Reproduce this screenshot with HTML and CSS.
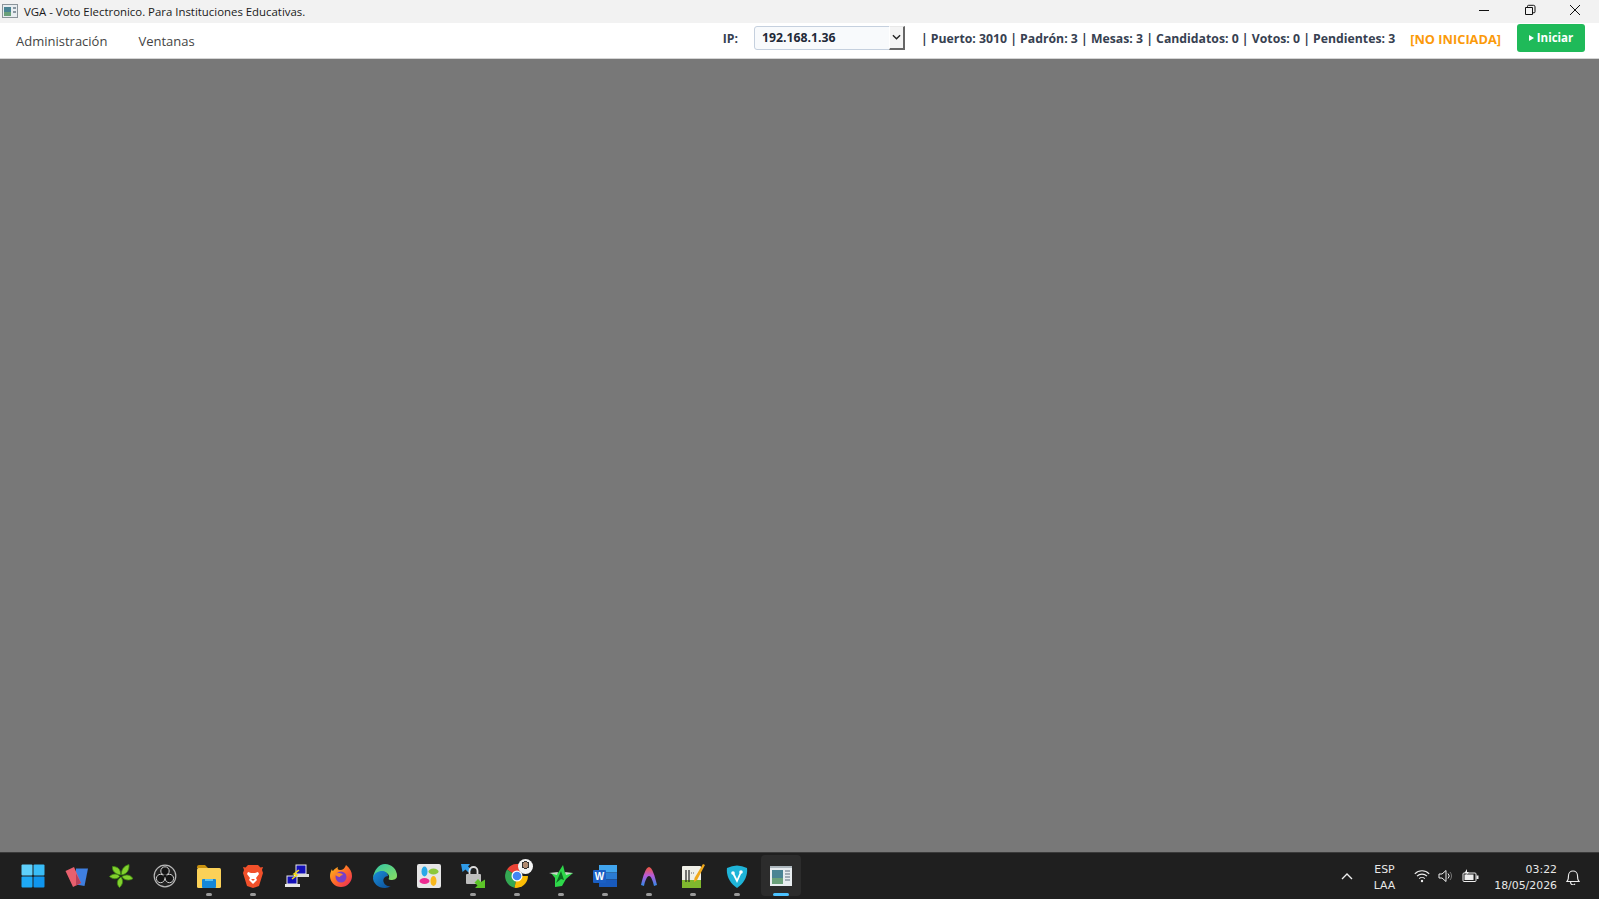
FILE: index.html
```html
<!DOCTYPE html>
<html lang="es">
<head>
    <meta charset="UTF-8">
    <title>VGA - Voto Electronico</title>
    <link rel="stylesheet" href="styles.css">
</head>
<body>
    <div class="window">
        <div class="titlebar">
            <svg class="app-icon" viewBox="0 0 16 14" width="16" height="14">
                <rect x="0.5" y="0.5" width="15" height="13" fill="#e8edf0" stroke="#8b949a"/>
                <rect x="2" y="3" width="7" height="9" fill="#4a8494"/>
                <rect x="2" y="8" width="7" height="4" fill="#6aa07a"/>
                <rect x="11" y="3" width="3" height="2" fill="#8a98a2"/>
                <rect x="11" y="7" width="3" height="2" fill="#8a98a2"/>
            </svg>
            <span class="title-text">VGA - Voto Electronico. Para Instituciones Educativas.</span>
            <div class="win-controls">
                <svg viewBox="0 0 12 12" width="12" height="12"><path d="M1 6.500h10" stroke="#111" stroke-width="1" fill="none"/></svg>
                <svg viewBox="0 0 12 12" width="12" height="12"><path d="M1.500 3.500h7v7h-7z M3.500 3.500v-1.200q0-1 1-1h5q1.500 0 1.500 1.500v5q0 1-1 1h-1.200" stroke="#111" stroke-width="1" fill="none"/></svg>
                <svg viewBox="0 0 12 12" width="12" height="12"><path d="M1 1l10 10M11 1L1 11" stroke="#111" stroke-width="1" fill="none"/></svg>
            </div>
        </div>

        <div class="menubar">
            <nav class="menu">
                <span>Administración</span>
                <span>Ventanas</span>
            </nav>
            <div class="status">
                <label class="ip-label" for="ip">IP:</label>
                <div class="ip-select">
                    <select id="ip"><option>192.168.1.36</option></select>
                    <span class="ip-arrow">
                        <svg viewBox="0 0 10 6" width="9" height="6"><path d="M1 1l4 4 4-4" stroke="#222" stroke-width="1.500" fill="none"/></svg>
                    </span>
                </div>
                <span class="stats">| Puerto: 3010 | Padrón: 3 | Mesas: 3 | Candidatos: 0 | Votos: 0 | Pendientes: 3</span>
                <span class="state">[NO INICIADA]</span>
                <button class="start"><span class="play"></span>Iniciar</button>
            </div>
        </div>

        <main class="workspace"></main>
    </div>

    <footer class="taskbar">
        <div class="apps">
            <!-- start -->
            <div class="app"><svg viewBox="0 0 24 24" width="24" height="24">
                <rect x="0.500" y="0.500" width="11" height="11" rx="1" fill="#5fd0fb"/><rect x="12.500" y="0.500" width="11" height="11" rx="1" fill="#39bdf8"/>
                <rect x="0.500" y="12.500" width="11" height="11" rx="1" fill="#1ea9f5"/><rect x="12.500" y="12.500" width="11" height="11" rx="1" fill="#0f95ee"/>
            </svg></div>
            <!-- cards -->
            <div class="app"><svg viewBox="0 0 24 24" width="24" height="24">
                <path d="M11 4.500h12l-3.500 17.500-8.500-1.500z" fill="#3f7fe0"/>
                <path d="M0.500 7L9 3l7 16-8 4z" fill="#e8606e"/>
                <path d="M11 9.500l5 9.500-5 2.500z" fill="#b8405a"/>
            </svg></div>
            <!-- leaf -->
            <div class="app"><svg viewBox="0 0 24 24" width="24" height="24">
                <path d="M11.500 11C6 10 3 7 3.500 2.500 8.500 2.500 12 5 11.500 11zM12.500 11C12 6 14.500 2 20 0.500 20.500 6 18 10 12.500 11zM13 12.500c4-2.500 8-2 11 2-3.500 2.500-9 2-11-2zM12 13c2.500 3.500 2 7.500-1.500 10.500C7 20 8 15.500 12 13zM10.500 12.500C8 15.500 4 15.500 0.500 12.500 3.500 9.500 8.500 9 10.500 12.500z" fill="#82d02e" stroke="#3f8a12" stroke-width="0.800"/>
            </svg></div>
            <!-- obs -->
            <div class="app"><svg viewBox="0 0 24 24" width="24" height="24">
                <circle cx="12" cy="12" r="10.800" fill="#222" stroke="#b8b8b8" stroke-width="1.200"/>
                <circle cx="12" cy="7" r="4.200" fill="#141414" stroke="#cfcfcf" stroke-width="1"/>
                <circle cx="16.400" cy="14.500" r="4.200" fill="#141414" stroke="#cfcfcf" stroke-width="1"/>
                <circle cx="7.600" cy="14.500" r="4.200" fill="#141414" stroke="#cfcfcf" stroke-width="1"/>
                <circle cx="12" cy="12" r="1.800" fill="#141414"/>
            </svg></div>
            <!-- explorer -->
            <div class="app on"><svg viewBox="0 0 24 24" width="24" height="24">
                <path d="M0 3q0-2 2-2h6l3 3h-11z" fill="#c9920f"/>
                <rect x="0" y="4" width="24" height="20" rx="1.500" fill="#fbd158"/>
                <rect x="5" y="15" width="14" height="9" rx="1" fill="#1587d8"/>
                <rect x="8" y="15" width="8" height="2" fill="#5cc2f2"/>
            </svg></div>
            <!-- brave -->
            <div class="app on"><svg viewBox="0 0 24 24" width="24" height="24">
                <path d="M7 1h10l2.500 2.500L22 3l-1 3 1 3-4 13-6 2-6-2L2 9l1-3-1-3 2.500.5z" fill="#f1502a"/>
                <path d="M7 8l3 1h4l3-1 1 2-3 4 1 2-4 4-4-4 1-2-3-4z" fill="#fff"/>
                <path d="M10 15h4l-2 2z" fill="#f1502a"/>
            </svg></div>
            <!-- network -->
            <div class="app"><svg viewBox="0 0 24 24" width="24" height="24">
                <rect x="11" y="1" width="10" height="9" fill="#1410b8" stroke="#e8e8e8"/>
                <rect x="9" y="10" width="15" height="3" fill="#dcdcdc"/>
                <rect x="2" y="12" width="10" height="8" fill="#1410b8" stroke="#e8e8e8"/>
                <rect x="0" y="20" width="15" height="3" fill="#e8e8e8"/>
                <path d="M14 6L9 10l3 1-5 4" stroke="#f4dc1a" stroke-width="1.500" fill="none"/>
            </svg></div>
            <!-- firefox -->
            <div class="app"><svg viewBox="0 0 24 24" width="24" height="24">
                <defs><linearGradient id="ff" x1="0" y1="0" x2="1" y2="1"><stop offset="0" stop-color="#ffc21a"/><stop offset="0.500" stop-color="#ff6a2a"/><stop offset="1" stop-color="#e8245e"/></linearGradient></defs>
                <path d="M17 1c4 3 6 7 6 11a11 11 0 0 1-22 0c0-3 1-5 2-7 0 1 .5 2 1 2 1-2 3-3 5-4-1 2 0 3 2 3 3 0 5-2 6-5z" fill="url(#ff)"/>
                <circle cx="12" cy="13" r="5.500" fill="#7a3fc8"/>
                <path d="M6 10c3-2 7-1 8 1-2 0-3 1-3 2-2 0-4-1-5-3z" fill="#ff8a2a"/>
            </svg></div>
            <!-- edge -->
            <div class="app"><svg viewBox="0 0 24 24" width="24" height="24">
                <defs>
                    <linearGradient id="edge1" x1="0" y1="0" x2="1" y2="1"><stop offset="0" stop-color="#2fc4a8"/><stop offset="1" stop-color="#8ae060"/></linearGradient>
                    <linearGradient id="edge2" x1="0" y1="0" x2="1" y2="1"><stop offset="0" stop-color="#1a8ed8"/><stop offset="1" stop-color="#0c4d96"/></linearGradient>
                </defs>
                <path d="M12 0a12 12 0 0 1 12 12c0 3-3 4-6 4-2 0-3-1-2-2 1-3-2-6-6-6-4 0-8 2-10 6C1 6 6 0 12 0z" fill="url(#edge1)"/>
                <path d="M0 14c1-5 5-7 9-7 3 0 6 2 6 5-3 0-6 3-4 7 1 2 4 4 7 3-2 1-4 2-6 2-7 0-12-5-12-10z" fill="url(#edge2)"/>
            </svg></div>
            <!-- petals -->
            <div class="app"><svg viewBox="0 0 24 24" width="24" height="24">
                <rect width="24" height="24" rx="2" fill="#e6e6e6"/>
                <ellipse cx="7.500" cy="7.500" rx="3" ry="5" fill="#28a8e8"/>
                <ellipse cx="16.500" cy="7.500" rx="5" ry="3" fill="#8cc83c"/>
                <ellipse cx="7.500" cy="17" rx="5" ry="3" fill="#ec2a90"/>
                <ellipse cx="16.500" cy="17" rx="3" ry="5" fill="#f8b81c"/>
            </svg></div>
            <!-- lock -->
            <div class="app on"><svg viewBox="0 0 24 24" width="24" height="24">
                <path d="M0 0h9L7 2.500l3.500 3-3 3-3-3-3 2.500z" fill="#2f9be8"/>
                <path d="M8.500 10V7a4 4 0 0 1 8 0v3" stroke="#dcdcdc" stroke-width="1.800" fill="none"/>
                <rect x="5" y="10" width="15" height="10" rx="1" fill="#bdbdbd"/>
                <path d="M24 24h-10l2.500-2.500-3-3 3.500-3.500 3 3 4-2.500z" fill="#5cc428"/>
            </svg></div>
            <!-- chrome -->
            <div class="app on"><svg viewBox="0 0 24 24" width="24" height="24">
                <path d="M12 12L2 5.500A12 12 0 0 1 23 7H12z" fill="#ea4335"/>
                <path d="M12 12L2 5.500A12 12 0 0 0 9.500 23.800z" fill="#34a853"/>
                <path d="M12 12h11a12 12 0 0 1-13.500 11.800z" fill="#fbbc05"/>
                <circle cx="12" cy="12" r="5.500" fill="#fff"/><circle cx="12" cy="12" r="4.300" fill="#4285f4"/>
            </svg><span class="avatar"></span></div>
            <!-- green star -->
            <div class="app on"><svg viewBox="0 0 24 24" width="24" height="24">
                <path d="M2 9l7 0L14 1l2 8 8 0-7 6-4 7-7 1 0-9z" fill="#2ed84a"/>
                <path d="M0 9l9-1-1 3zM24 9l-8-1 1 3z" fill="#c8d8c8"/>
                <path d="M7 19l5-12 3 9-3-1z" fill="#0c6a20"/>
            </svg></div>
            <!-- word -->
            <div class="app on"><svg viewBox="0 0 24 24" width="24" height="24">
                <rect x="6" y="1" width="18" height="7.500" fill="#41a5ee"/><rect x="6" y="8.500" width="18" height="7" fill="#2b7cd3"/>
                <rect x="6" y="15.500" width="18" height="7.500" fill="#185abd"/>
                <rect x="0" y="6" width="13" height="13" rx="1" fill="#1a5fc4"/>
                <text x="6.500" y="16" class="word-w">W</text>
            </svg></div>
            <!-- arc -->
            <div class="app on"><svg viewBox="0 0 24 24" width="24" height="24">
                <defs><linearGradient id="arc" x1="0" y1="0" x2="0" y2="1"><stop offset="0" stop-color="#f0563a"/><stop offset="0.450" stop-color="#b85ad8"/><stop offset="1" stop-color="#2f8ae8"/></linearGradient></defs>
                <path d="M12 3c3 0 6 9 8 18l-3 1c-1-5-3-10-5-10s-4 5-5 10l-3-1C6 12 9 3 12 3z" fill="url(#arc)"/>
            </svg></div>
            <!-- notepad -->
            <div class="app on"><svg viewBox="0 0 24 24" width="24" height="24">
                <rect x="1" y="2" width="19" height="22" rx="1" fill="#f0f0e8"/>
                <rect x="1" y="16" width="19" height="8" fill="#7fb82e"/>
                <path d="M5 6v12M8 6v12" stroke="#222" stroke-width="1.200"/>
                <path d="M10 9h3" stroke="#666" stroke-width="1" stroke-dasharray="1 1"/>
                <path d="M22 0l2 1-8 15-3 2 .5-4z" fill="#f0a81c"/>
            </svg></div>
            <!-- shield -->
            <div class="app on"><svg viewBox="0 0 24 24" width="24" height="24">
                <path d="M2 4q10-5 20 0c1 8-3 15-10 20C5 19 1 12 2 4z" fill="#1fb4d8"/>
                <path d="M8 9l4 8 4-9" stroke="#fff" stroke-width="1.800" fill="none"/>
                <circle cx="8" cy="9" r="1.800" fill="#fff"/><circle cx="16" cy="8" r="1.800" fill="#fff"/>
            </svg></div>
            <!-- this app -->
            <div class="app active"><svg viewBox="0 0 24 24" width="24" height="24">
                <rect x="1" y="2" width="22" height="20" fill="#e8edf0"/>
                <rect x="1" y="2" width="22" height="2" fill="#aeb8be"/>
                <rect x="3" y="6" width="11" height="14" fill="#4a8494"/>
                <rect x="3" y="14" width="11" height="6" fill="#6aa07a"/>
                <path d="M16 7h5M16 10h5M16 13h5M16 16h5" stroke="#8a98a2" stroke-width="1.300"/>
            </svg></div>
        </div>

        <div class="tray">
            <svg class="chev" viewBox="0 0 12 8" width="12" height="8"><path d="M1 7l5-5 5 5" stroke="#eee" stroke-width="1.400" fill="none"/></svg>
            <div class="lang"><span>ESP</span><span>LAA</span></div>
            <div class="tray-icons">
                <svg viewBox="0 0 16 14" width="16" height="14"><path d="M.8 4.800a10 10 0 0 1 14.400 0M3 7.200a7 7 0 0 1 10 0M5.200 9.600a4 4 0 0 1 5.600 0" stroke="#eee" stroke-width="1.100" fill="none"/><circle cx="8" cy="12" r="1.200" fill="#eee"/></svg>
                <svg viewBox="0 0 16 14" width="16" height="14"><path d="M1 5h3l4-3.500v11L4 9H1z" stroke="#eee" fill="none"/><path d="M10 4.500a3.500 3.500 0 0 1 0 5" stroke="#eee" fill="none"/><path d="M12 3a6 6 0 0 1 0 8" stroke="#777" fill="none"/></svg>
                <svg viewBox="0 0 17 14" width="17" height="14"><rect x="1" y="4" width="13" height="8.500" rx="1" stroke="#eee" fill="none"/><rect x="2.500" y="5.500" width="9" height="5.500" fill="#eee"/><rect x="14.500" y="6.500" width="2" height="3.500" fill="#eee"/><path d="M5 0L2.500 4H5L3.500 7 7 3H5z" fill="#eee"/></svg>
            </div>
            <div class="clock"><span>03:22</span><span>18/05/2026</span></div>
            <svg class="bell" viewBox="0 0 14 16" width="14" height="16"><path d="M1 12.500c1.500-1.500 1.500-3 1.500-6a4.500 4.500 0 0 1 9 0c0 3 0 4.500 1.500 6zM5 12.500a2 2 0 0 0 4 2.200" stroke="#eee" stroke-width="1.100" fill="none"/></svg>
        </div>
    </footer>
</body>
</html>
```

FILE: styles.css
```css
* {
    box-sizing: border-box;
}

html, body {
    height: 100%;
}

body {
    margin: 0;
    display: flex;
    flex-direction: column;
    overflow: hidden;
    font-family: "Open Sans", "Noto Sans", sans-serif;
    background-color: #787878;
}

.window {
    flex: 1;
    display: flex;
    flex-direction: column;
}

.titlebar {
    height: 23px;
    display: flex;
    align-items: center;
    padding-left: 2px;
    background-color: #f2f2f2;
    color: #1a1a1a;
}

.app-icon {
    margin-top: -1px;
}

.title-text {
    margin-left: 6px;
    font-size: 11.400px;
}

.win-controls {
    margin-left: auto;
    width: 121px;
    padding: 0 18px 3px 0;
    display: flex;
    justify-content: space-between;
}

.menubar {
    height: 36px;
    display: flex;
    align-items: center;
    justify-content: space-between;
    padding: 0 14px 0 16px;
    background-color: #fff;
    border-bottom: 1px solid #d4d4d4;
}

.menu {
    display: flex;
    gap: 31px;
    font-size: 13px;
    color: #444;
    padding-top: 1px;
}

.status {
    display: flex;
    align-items: center;
    font-size: 12.250px;
    font-weight: 700;
    color: #374151;
    margin-top: -6px;
}

.ip-label {
    margin-right: 16px;
    margin-top: 2px;
}

.ip-select {
    position: relative;
    width: 151px;
    height: 24px;
    margin-right: 16px;
}

.ip-select select {
    appearance: none;
    width: 100%;
    height: 100%;
    padding: 0 0 0 7px;
    border: 1px solid #c5d0de;
    border-radius: 3px;
    background-color: #f8fafc;
    font: inherit;
    color: #1f2937;
}

.ip-arrow {
    position: absolute;
    top: 0;
    right: 0;
    width: 16px;
    height: 24px;
    display: flex;
    align-items: center;
    justify-content: center;
    background-color: #f4f4f4;
    border-right: 2px solid #666;
    border-bottom: 2px solid #666;
    border-top: 1px solid #e8e8e8;
    border-left: 1px solid #fff;
}

.stats {
    margin: 2px 15px 0 0;
}

.state {
    color: #fb9a0a;
    font-size: 12.800px;
    margin: 2px 16px 0 0;
}

.start {
    width: 68px;
    height: 28px;
    display: flex;
    align-items: center;
    justify-content: center;
    gap: 3px;
    padding: 0;
    border: none;
    border-radius: 3px;
    background-color: #1fba59;
    color: #fff;
    font: inherit;
    font-size: 11.500px;
}

.play {
    width: 0;
    height: 0;
    border-left: 5px solid #fff;
    border-top: 3px solid transparent;
    border-bottom: 3px solid transparent;
}

.workspace {
    flex: 1;
    background-color: #787878;
}

.taskbar {
    height: 47px;
    display: flex;
    align-items: center;
    justify-content: space-between;
    padding-left: 11px;
    background-color: #1f1f1f;
    border-top: 1px solid #3a3a3a;
    color: #eee;
}

.apps {
    display: flex;
    height: 100%;
}

.app {
    position: relative;
    width: 44px;
    display: flex;
    align-items: center;
    justify-content: center;
}

.app.on::after,
.app.active::after {
    content: "";
    position: absolute;
    left: 19px;
    bottom: 3px;
    width: 6px;
    height: 3px;
    border-radius: 2px;
    background-color: #9a9a9a;
}

.app.active {
    background-color: #2c2c2c;
    border-radius: 4px;
    margin: 2px 0 3px 2px;
    width: 40px;
}

.app.active::after {
    left: 12px;
    bottom: 0;
    width: 16px;
    background-color: #4cc2ff;
}

.avatar {
    position: absolute;
    top: 6px;
    left: 23px;
    width: 15px;
    height: 15px;
    border-radius: 50%;
    background: radial-gradient(circle at 50% 40%, #b08a70 0 3px, #333 3px 4px, #f4f4f4 4px);
}

.word-w {
    font-family: "Liberation Sans", sans-serif;
    font-size: 10px;
    font-weight: 700;
    fill: #fff;
    text-anchor: middle;
}

.tray {
    display: flex;
    align-items: center;
    font-size: 10.900px;
    font-family: "DejaVu Sans", sans-serif;
    color: #e8e8e8;
    padding-right: 19px;
}

.chev {
    margin-right: 21px;
}

.lang, .clock {
    display: flex;
    flex-direction: column;
    gap: 2px;
    line-height: 14px;
    margin-top: 4px;
}

.lang {
    align-items: center;
    margin-right: 19px;
}

.tray-icons {
    display: flex;
    align-items: center;
    gap: 8px;
}

.clock {
    align-items: flex-end;
    margin-left: 15px;
    margin-right: 9px;
}

.bell {
    margin-top: 1px;
}
```
